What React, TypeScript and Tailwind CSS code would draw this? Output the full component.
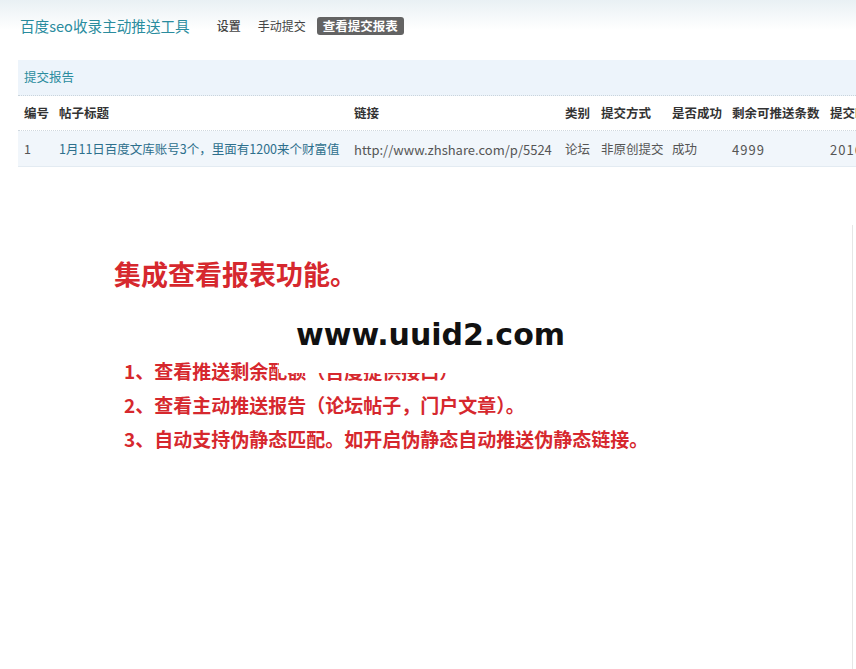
import React from "react";

const cols = "grid grid-cols-[35px_295px_211px_36px_71px_60px_98px_120px] pl-[6px] items-center whitespace-nowrap";

export default function App() {
  return (
    <div
      className="relative w-[856px] h-[669px] overflow-hidden bg-white"
      style={{ fontFamily: '"Noto Sans CJK SC", "Noto Sans", sans-serif' }}
    >
      {/* top nav */}
      <div className="h-[60px] bg-gradient-to-b from-[#e9f0f4] via-white to-white">
        <div className="flex items-center pt-[17px] pl-5 h-[35px]">
          <span className="text-[14.6px] text-[#2a8c9e] leading-none">百度seo收录主动推送工具</span>
          <span className="ml-[27px] text-[12px] text-[#444] font-medium leading-none">设置</span>
          <span className="ml-[17px] text-[12px] text-[#444] leading-none">手动提交</span>
          <span className="ml-[11px] h-[18px] px-[6px] flex items-center rounded-[3px] bg-[#636363] text-white text-[12.5px] font-bold leading-none">
            查看提交报表
          </span>
        </div>
      </div>

      {/* report panel */}
      <div className="ml-[18px] text-[12.5px]">
        <div className="h-9 flex items-center pl-[6px] bg-[#edf4fb] border-b border-dotted border-[#c9d4dc] text-[#2a8c9e]">
          提交报告
        </div>
        <div className={`${cols} h-[35px] bg-white font-bold text-[#333] border-b border-dotted border-[#cfd8df]`}>
          <span>编号</span>
          <span>帖子标题</span>
          <span>链接</span>
          <span>类别</span>
          <span>提交方式</span>
          <span>是否成功</span>
          <span>剩余可推送条数</span>
          <span>提交时间</span>
        </div>
        <div className={`${cols} h-[36px] pt-[2px] bg-[#f1f6fb] text-[#555] border-b border-[#e3ebf2]`}>
          <span>1</span>
          <span className="text-[#2d6f8c]">1月11日百度文库账号3个，里面有1200来个财富值</span>
          <span className="text-[13px]">http://www.zhshare.com/p/5524</span>
          <span>论坛</span>
          <span>非原创提交</span>
          <span>成功</span>
          <span className="text-[13px] tracking-[1px]">4999</span>
          <span className="text-[13px] tracking-[1px]">2016-01-11</span>
        </div>
      </div>

      {/* feature notes */}
      <div className="pl-[114px] pt-[92px] text-[#d6282e] font-bold">
        <div className="text-[27px] leading-[30px]">集成查看报表功能。</div>
        <div className="pl-[10px] pt-[65px] text-[19px] leading-[34px]">
          <div>1、查看推送剩余配额（百度提供接口）</div>
          <div>2、查看主动推送报告（论坛帖子，门户文章）。</div>
          <div>3、自动支持伪静态匹配。如开启伪静态自动推送伪静态链接。</div>
        </div>
      </div>

      {/* watermark */}
      <div className="absolute left-[279px] top-[300px] w-[318px] h-[73px] bg-white flex items-center pl-[17px]">
        <span
          className="text-[30px] font-bold text-[#111] leading-none -mt-[4px]"
          style={{ fontFamily: '"DejaVu Sans", sans-serif' }}
        >
          www.uuid2.com
        </span>
      </div>

      {/* faint right edge line */}
      <div className="absolute right-[3px] top-[225px] bottom-0 w-px bg-[#e6e6e6]" />
    </div>
  );
}
